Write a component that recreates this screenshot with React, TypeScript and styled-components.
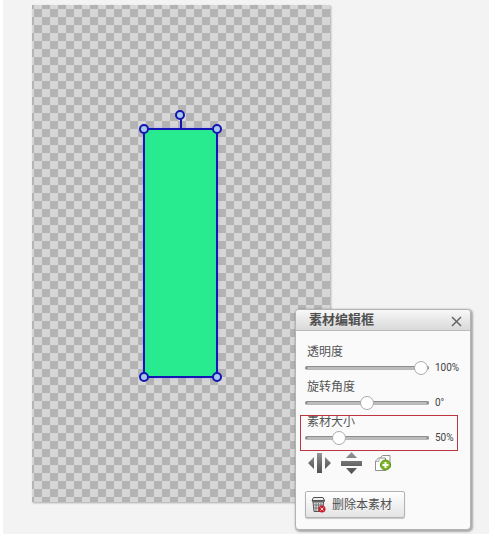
import React, { useId, useState } from "react";
import styled, { createGlobalStyle } from "styled-components";

const GlobalStyle = createGlobalStyle`
  *, *::before, *::after { box-sizing: border-box; }
  html, body, #root { min-height: 100%; }
  body {
    margin: 0;
    background: #f3f3f3;
    color: #555;
    font: 12px/16px "Liberation Sans", "Noto Sans CJK SC", sans-serif;
  }
`;

const Workspace = styled.main`
  position: relative;
  min-height: 100vh;
  border-left: 3px solid #fff;
  padding: 5px 29px 31px;
`;

const Canvas = styled.section`
  position: relative;
  width: calc(100% - 130px);
  height: calc(100vh - 37px);
  min-height: 400px;
  background: repeating-conic-gradient(#d6d6d6 0 25%, #b3b3b3 0 50%) 2px 4px / 16px 16px;
  box-shadow: 1px 1px 2px rgba(0, 0, 0, 0.3);
`;

const Selection = styled.div`
  position: absolute;
  left: 111px;
  top: 123px;
  width: 75px;
  height: 250px;
  border: 2px solid #1414b4;
  background: #28eb8f;
  box-shadow: 0 0 3px rgba(160, 160, 240, 0.7);
`;

const Stem = styled.span`
  position: absolute;
  left: 35px;
  top: -11px;
  width: 2px;
  height: 10px;
  background: #1414b4;
`;

const Handle = styled.button<{ $x: string; $y: string }>`
  position: absolute;
  left: ${({ $x }) => $x};
  top: ${({ $y }) => $y};
  width: 10px;
  height: 10px;
  margin: -5px;
  padding: 0;
  border: 2px solid #1414b4;
  border-radius: 50%;
  background: #a9c9ea;
  cursor: pointer;
`;

const Panel = styled.aside`
  position: absolute;
  right: 18px;
  bottom: 4px;
  width: 176px;
  border: 1px solid #b3b3b3;
  border-radius: 4px;
  background: #fafafa;
  box-shadow: 1px 1px 2px 1px rgba(0, 0, 0, 0.3);
`;

const PanelHeader = styled.header`
  display: flex;
  align-items: center;
  justify-content: space-between;
  height: 21px;
  padding: 0 7px 0 13px;
  border-bottom: 1px solid #bbb;
  border-radius: 3px 3px 0 0;
  background: linear-gradient(#f8f8f8, #d9d9d9);
`;

const Title = styled.h2`
  margin: 0;
  font-size: 13px;
  line-height: 20px;
  color: #505050;
`;

const CloseButton = styled.button`
  display: flex;
  padding: 1px;
  margin-top: 3px;
  border: 0;
  background: none;
  color: #666;
  cursor: pointer;
`;

const PanelBody = styled.div`
  padding: 13px 9px 11px;
`;

const Field = styled.div`
  position: relative;
  height: 35px;
`;

const FieldLabel = styled.label`
  display: block;
  height: 16px;
  padding-left: 2px;
  line-height: 16px;
`;

const SliderRow = styled.div`
  display: flex;
  align-items: center;
  gap: 6px;
  height: 16px;
`;

const Slider = styled.input`
  appearance: none;
  flex: 1;
  min-width: 0;
  height: 14px;
  margin: 0;
  background: transparent;
  cursor: pointer;

  &::-webkit-slider-runnable-track {
    height: 4px;
    border: 1px solid #8d8d8d;
    border-bottom-color: #b8b8b8;
    border-radius: 2px;
    background: #bcbcbc;
    box-shadow: inset 1px 0 #777, inset -1px 0 #777;
  }
  &::-webkit-slider-thumb {
    appearance: none;
    width: 14px;
    height: 14px;
    margin-top: -6px;
    border: 1px solid #aaa;
    border-radius: 50%;
    background: #fff;
  }
`;

const Value = styled.output`
  width: 26px;
  font: 10px/16px Roboto, sans-serif;
  color: #444;
`;

const Highlight = styled.span`
  position: absolute;
  inset: 1px 3px -2px -5px;
  border: 1px solid #bd3540;
  pointer-events: none;
`;

const Toolbar = styled.div`
  display: flex;
  align-items: center;
  height: 24px;
  margin-top: 2px;
  padding-left: 3px;
`;

const IconButton = styled.button`
  display: flex;
  margin-right: 10px;
  padding: 0;
  border: 0;
  background: none;
  cursor: pointer;
`;

const DeleteButton = styled.button`
  display: flex;
  align-items: center;
  gap: 6px;
  width: 100px;
  height: 27px;
  margin-top: 16px;
  padding: 0 5px;
  border: 1px solid #b2b2b2;
  border-radius: 2px;
  background: linear-gradient(#fff, #e4e4e4);
  box-shadow: 0 1px 1px rgba(0, 0, 0, 0.2);
  color: #505050;
  font: inherit;
  white-space: nowrap;
  cursor: pointer;
`;

const CloseIcon = () => (
  <svg width="11" height="11" viewBox="0 0 11 11" aria-hidden="true">
    <path d="M1 1 10 10M10 1 1 10" stroke="currentColor" strokeWidth="1.5" />
  </svg>
);

const IconShade = ({ id }: { id: string }) => (
  <defs>
    <linearGradient id={id} x1="0" y1="0" x2="0" y2="22" gradientUnits="userSpaceOnUse">
      <stop offset="0" stopColor="#9a9a9a" />
      <stop offset="0.6" stopColor="#666" />
      <stop offset="1" stopColor="#505050" />
    </linearGradient>
  </defs>
);

const FlipHorizontalIcon = () => (
  <svg width="23" height="22" viewBox="0 0 23 22" aria-hidden="true">
    <IconShade id="shade-h" />
    <path d="M9 1h5v20H9zM0 11l6-6v12zM23 11l-6-6v12z" fill="url(#shade-h)" />
  </svg>
);

const FlipVerticalIcon = () => (
  <svg width="22" height="22" viewBox="0 0 22 22" aria-hidden="true">
    <IconShade id="shade-v" />
    <path d="M0 9h21v5H0zM10.500 0l5.500 6H5zM10.500 22l5.500-6H5z" fill="url(#shade-v)" />
  </svg>
);

const CopyIcon = () => (
  <svg width="20" height="18" viewBox="-2 0 20 18" aria-hidden="true">
    <path d="M5 4.500 7.500 1.500h7.500v12H5z" fill="#fff" stroke="#909090" />
    <path d="M.5 7 3.500 4h7v12.500H.5z" fill="#fff" stroke="#909090" />
    <path d="M.5 7.500h3.500V4" fill="none" stroke="#aaa" />
    <circle cx="10.500" cy="11" r="5" fill="#7fb922" stroke="#578b17" />
    <path d="M10.500 8v6M7.500 11h6" stroke="#fff" strokeWidth="2" />
  </svg>
);

const DeleteIcon = () => (
  <svg width="15" height="17" viewBox="0 0 15 17" aria-hidden="true">
    <path d="M2 6h10.500l-.5 9.500H3z" fill="#ddd" stroke="#555" />
    <path d="M5 7v8M7.500 7v8M10 7v8M3 9h9M3 12h8" stroke="#777" />
    <path d="M2.500 1.500h9.500l1.500 3H1z" fill="#eee" stroke="#4d4d4d" />
    <path d="M1 5h13" stroke="#555" strokeWidth="1.500" />
    <circle cx="11" cy="13" r="3.500" fill="#c91f2b" />
    <path d="M9.500 11.500l3 3M12.500 11.500l-3 3" stroke="#ffd5d5" />
  </svg>
);

interface SliderFieldProps {
  label: string;
  initial: number;
  min?: number;
  max: number;
  format: (value: number) => string;
  highlighted?: boolean;
}

function SliderField({ label, initial, min = 0, max, format, highlighted }: SliderFieldProps) {
  const id = useId();
  const [value, setValue] = useState(initial);
  return (
    <Field>
      <FieldLabel htmlFor={id}>{label}</FieldLabel>
      <SliderRow>
        <Slider
          id={id}
          type="range"
          min={min}
          max={max}
          value={value}
          onChange={(event) => setValue(Number(event.target.value))}
        />
        <Value htmlFor={id}>{format(value)}</Value>
      </SliderRow>
      {highlighted && <Highlight />}
    </Field>
  );
}

export default function App() {
  return (
    <>
      <GlobalStyle />
      <Workspace>
        <Canvas aria-label="画布">
          <Selection>
            <Stem />
            <Handle $x="35px" $y="-15px" aria-label="旋转" />
            <Handle $x="-1px" $y="-1px" aria-label="左上角" />
            <Handle $x="calc(100% + 1px)" $y="-1px" aria-label="右上角" />
            <Handle $x="-1px" $y="calc(100% + 1px)" aria-label="左下角" />
            <Handle $x="calc(100% + 1px)" $y="calc(100% + 1px)" aria-label="右下角" />
          </Selection>
        </Canvas>
        <Panel>
          <PanelHeader>
            <Title>素材编辑框</Title>
            <CloseButton aria-label="关闭">
              <CloseIcon />
            </CloseButton>
          </PanelHeader>
          <PanelBody>
            <SliderField label="透明度" initial={100} max={100} format={(v) => `${v}%`} />
            <SliderField label="旋转角度" initial={0} min={-180} max={180} format={(v) => `${v}°`} />
            <SliderField label="素材大小" initial={50} max={210} format={(v) => `${v}%`} highlighted />
            <Toolbar>
              <IconButton aria-label="水平翻转">
                <FlipHorizontalIcon />
              </IconButton>
              <IconButton aria-label="垂直翻转">
                <FlipVerticalIcon />
              </IconButton>
              <IconButton aria-label="复制">
                <CopyIcon />
              </IconButton>
            </Toolbar>
            <DeleteButton>
              <DeleteIcon />
              删除本素材
            </DeleteButton>
          </PanelBody>
        </Panel>
      </Workspace>
    </>
  );
}
